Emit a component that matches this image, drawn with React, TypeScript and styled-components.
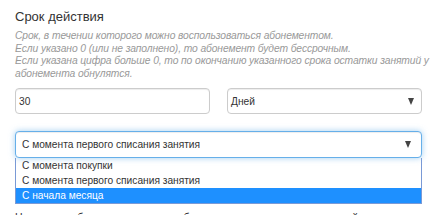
import React from "react";
import styled, { createGlobalStyle } from "styled-components";

const Global = createGlobalStyle`
  html, body { margin: 0; padding: 0; background: #fff; }
  body { font-family: "Liberation Sans", Arial, sans-serif; color: #333; overflow: hidden; }
`;

const Page = styled.div`
  width: 437px;
  height: 215px;
  padding: 9px 15px 0 15px;
  box-sizing: border-box;
  overflow: hidden;
`;

const Label = styled.div`
  font-size: 13px;
  line-height: 16px;
  color: #333;
`;

const Help = styled.div`
  margin-top: 5px;
  font-size: 10.3px;
  font-style: italic;
  line-height: 12.5px;
  color: #999;
  white-space: nowrap;
  letter-spacing: -0.1px;
`;

const Row = styled.div`
  display: grid;
  grid-template-columns: 1fr 1fr;
  column-gap: 17px;
  margin-top: 8px;
`;

const Field = styled.div<{ $focus?: boolean }>`
  position: relative;
  height: ${(p) => (p.$focus ? "27px" : "26px")};
  box-sizing: border-box;
  border: 1px solid ${(p) => (p.$focus ? "#66afe9" : "#ccc")};
  border-radius: 4px;
  box-shadow: ${(p) =>
    p.$focus
      ? "inset 0 1px 1px rgba(0,0,0,.075), 0 0 6px rgba(102,175,233,.6)"
      : "inset 0 1px 1px rgba(0,0,0,.075)"};
  display: flex;
  align-items: center;
  padding: 0 ${(p) => (p.$focus ? "6px" : "3px")};
  font-size: 10.2px;
  color: #333;
  background: #fff;
`;

const Value = styled.span`
  flex: 1;
  white-space: nowrap;
`;

const Arrow = styled.span`
  width: 0;
  height: 0;
  border-left: 3.5px solid transparent;
  border-right: 3.5px solid transparent;
  border-top: 7px solid #444;
  margin-right: 4px;
`;

const Block = styled.div`
  margin-top: 17px;
`;

const List = styled.div`
  border: 1px solid #7a9ad6;
  border-top: 0;
  background: #fff;
`;

const Option = styled.div<{ $active?: boolean }>`
  height: 15px;
  line-height: 15px;
  padding: 0 6px;
  font-size: 10.2px;
  color: ${(p) => (p.$active ? "#fff" : "#333")};
  background: ${(p) => (p.$active ? "#1e90ff" : "#fff")};
  white-space: nowrap;
`;

const Footer = styled.div`
  margin-top: 6px;
  font-size: 10.5px;
  line-height: 14px;
  color: #333;
  white-space: nowrap;
`;

export default function App() {
  return (
    <>
      <Global />
      <Page>
        <Label>Срок действия</Label>
        <Help>
          Срок, в течении которого можно воспользоваться абонементом.
          <br />
          Если указано 0 (или не заполнено), то абонемент будет бессрочным.
          <br />
          Если указана цифра больше 0, то по окончанию указанного срока остатки занятий у
          <br />
          абонемента обнулятся.
        </Help>
        <Row>
          <Field>
            <Value>30</Value>
          </Field>
          <Field>
            <Value>Дней</Value>
            <Arrow />
          </Field>
        </Row>
        <Block>
          <Field $focus>
            <Value>С момента первого списания занятия</Value>
            <Arrow />
          </Field>
          <List>
            <Option>С момента покупки</Option>
            <Option>С момента первого списания занятия</Option>
            <Option $active>С начала месяца</Option>
          </List>
        </Block>
        <Footer>Начисление бонусов за продажу абонемента по окончанию срока действия</Footer>
      </Page>
    </>
  );
}
